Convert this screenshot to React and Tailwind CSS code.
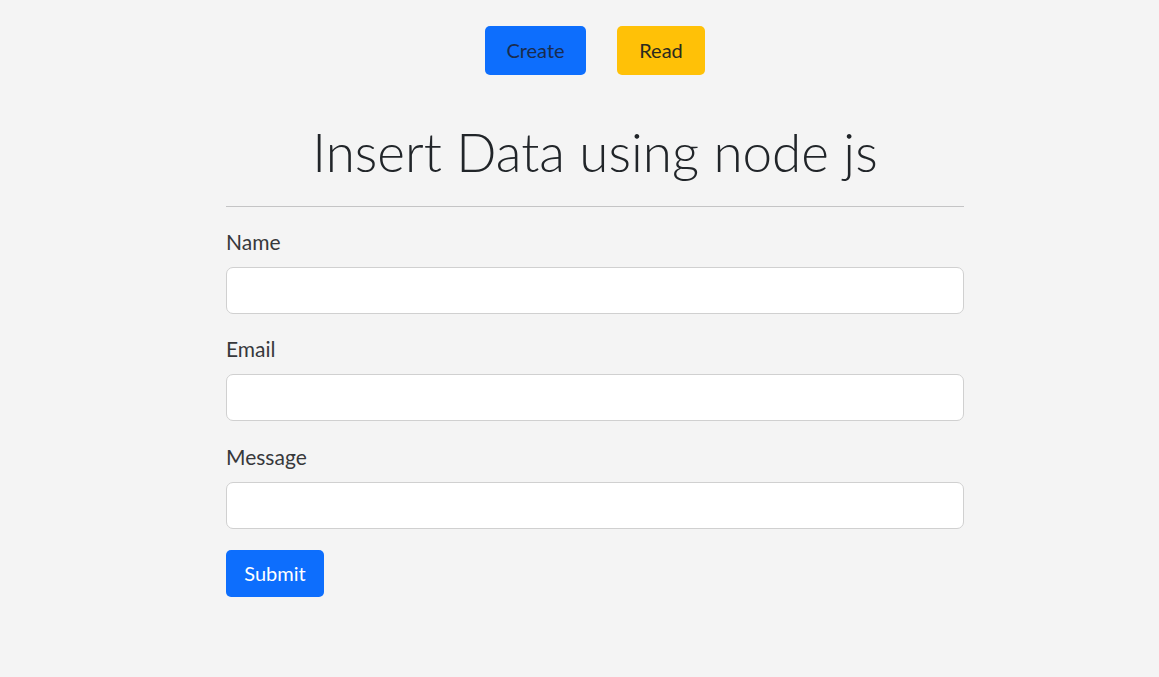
import React from 'react';

export default function App() {
    const fields = ['Name', 'Email', 'Message'];

    return (
        <div className="min-h-[677px] bg-[#f4f4f4] pl-[31px] text-[#212529]" style={{ fontFamily: 'Lato, "Open Sans", sans-serif' }}>
            <div className="mx-auto w-[738px] pt-[26px]">
                {/* Top nav buttons */}
                <div className="flex justify-center gap-[31px]">
                    <button className="h-[49px] w-[101px] rounded-[5px] bg-[#0d6efd] pb-[2px] text-[20px] text-[#1a2c4e]">Create</button>
                    <button className="h-[49px] w-[88px] rounded-[5px] bg-[#ffc107] pb-[2px] text-[20px] text-[#2b2a1f]">Read</button>
                </div>

                <h1 className="mt-[45px] text-center text-[53px] font-light leading-[1.2]">Insert Data using node js</h1>
                <hr className="mt-[22px] border-t border-[#c4c4c5]" />

                <form className="pt-[20px]" onSubmit={(e) => e.preventDefault()}>
                    {fields.map((f) => (
                        <div key={f} className="mb-[20.5px]">
                            <label className="block text-[21px] leading-[30px] text-[#37383b]">{f}</label>
                            <input
                                type="text"
                                className="mt-[10px] block h-[47px] w-full rounded-[7px] border border-[#d0d0d0] bg-white px-4 outline-none"
                            />
                        </div>
                    ))}
                    <button type="submit" className="mt-[1px] h-[47px] w-[98px] rounded-[5px] bg-[#0d6efd] pb-[2px] text-[20px] text-white">
                        Submit
                    </button>
                </form>
            </div>
        </div>
    );
}
